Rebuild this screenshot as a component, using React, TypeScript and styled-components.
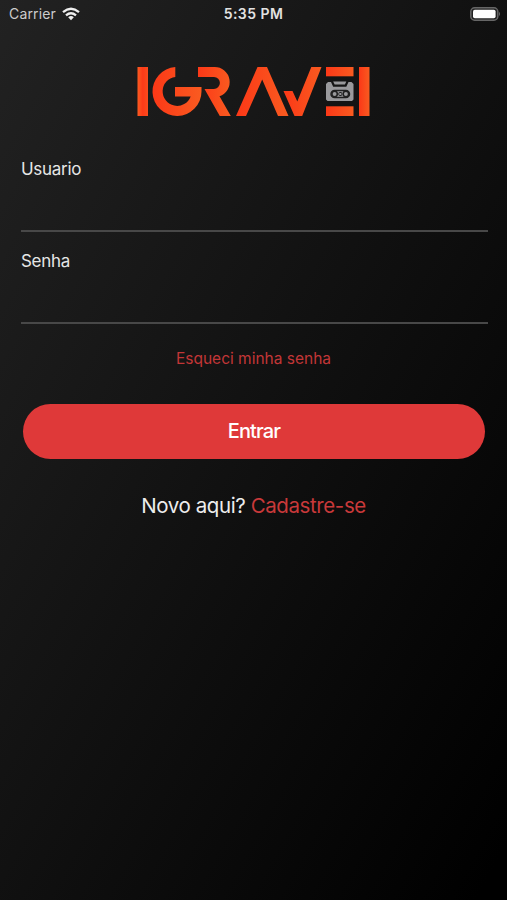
import React from "react";
import styled, { createGlobalStyle } from "styled-components";

const GlobalStyle = createGlobalStyle`
  * { box-sizing: border-box; }
  body {
    margin: 0;
    background: #000;
    font-family: Inter, "Liberation Sans", sans-serif;
  }
`;

const Screen = styled.main`
  display: flex;
  flex-direction: column;
  height: 900px;
  overflow: hidden;
  background: linear-gradient(119deg, #222 0%, #000 97%);
  color: #e6e6e6;
`;

const StatusBar = styled.header`
  display: grid;
  grid-template-columns: 1fr auto 1fr;
  align-items: center;
  height: 27px;
  padding: 0 6px 0 9px;
`;

const Carrier = styled.div`
  display: flex;
  align-items: center;
  gap: 6px;
  font-size: 14px;
  letter-spacing: 0.15px;
  color: #ccc;
`;

const Clock = styled.time`
  margin-right: 3px;
  font-size: 14px;
  font-weight: 600;
  letter-spacing: 0.45px;
  color: #e2e2e2;
`;

const Battery = styled.svg`
  justify-self: end;
`;

const Logo = styled.svg`
  display: block;
  flex: none;
  margin: 35px 0 0 134px;
`;

const Form = styled.form`
  display: flex;
  flex-direction: column;
  margin: 39px 19px 0 21px;
`;

const Field = styled.label`
  display: flex;
  flex-direction: column;
  height: 92px;
  font-size: 17px;
  line-height: 22px;
  letter-spacing: -0.3px;
`;

const Input = styled.input`
  height: 52px;
  padding: 0;
  border: 0;
  border-bottom: 2px solid #484848;
  outline: 0;
  background: transparent;
  color: inherit;
  font: inherit;
`;

const ForgotLink = styled.a`
  align-self: center;
  margin: 7px 2px 0 0;
  font-size: 15.5px;
  line-height: 20px;
  color: #c23637;
`;

const SubmitButton = styled.button`
  height: 55px;
  margin: 34.5px 3px 0 2px;
  padding: 0;
  border: 0;
  border-radius: 28px;
  background: #df3939;
  color: #fff;
  font: 500 20px Inter, sans-serif;
  letter-spacing: -0.85px;
`;

const SignUp = styled.p`
  margin: 33.5px 0 0;
  text-align: center;
  font-size: 20.5px;
  line-height: 28px;
  letter-spacing: -0.4px;
  color: #ededed;
`;

const SignUpLink = styled.a`
  letter-spacing: -0.4px;
  color: #c9393a;
`;

const WifiIcon = () => (
  <svg width="18" height="14" viewBox="0 0 18 14" fill="none" stroke="#eee" strokeWidth="2.3">
    <path d="M1 5.1Q9-1.7 17 5.1" />
    <path d="M4 8.3Q9 4.1 14 8.3" />
    <path d="M6.2 10.2Q9 7.9 11.8 10.2L9 13.3Z" fill="#eee" stroke="none" />
  </svg>
);

const BatteryIcon = () => (
  <Battery width="31" height="14" viewBox="0 0 31 14">
    <rect x="0.8" y="0.8" width="27" height="12.4" rx="3.8" fill="#222" stroke="#666" strokeWidth="1.5" />
    <rect x="3" y="2.7" width="22.6" height="8.6" rx="1.8" fill="#fff" />
    <path d="M29 4.8Q31 7 29 9.2Z" fill="#666" />
  </Battery>
);

const BrandLogo = () => (
  <Logo width="239" height="57" viewBox="134 62 239 57" role="img" aria-label="Igravei">
    <defs>
      <linearGradient id="flame">
        <stop offset="0" stopColor="#fc3817" />
        <stop offset="1" stopColor="#f95b20" />
      </linearGradient>
      <linearGradient id="ember">
        <stop offset="0" stopColor="#fc5a20" />
        <stop offset="0.5" stopColor="#fc3a18" />
        <stop offset="1" stopColor="#fb4b1c" />
      </linearGradient>
    </defs>
    <g fill="url(#flame)">
      <rect x="137.5" y="67" width="10.5" height="49" fill="url(#ember)" />
      <path d="M236 116L257.5 67H267L288.5 116H278L262.2 79.5L246 116Z" />
      <path d="M283.5 91H292.5L297.3 101.5L311.3 67H321.5L302.2 116H294.5Z" />
      <rect x="326" y="67" width="27.5" height="9.3" />
      <rect x="326" y="106.3" width="27.5" height="9.7" />
      <rect x="359" y="67" width="10.5" height="49" />
      <path d="M175.3 67V77A14.5 14.5 0 1 0 190.7 96.5H175V87H201.5V91.5A24.5 24.5 0 1 1 175.3 67Z" />
      <path d="M198 67H214.5A15 15 0 0 1 219.5 96.2L230.8 116H219.8L204.5 89H213.8A6 6 0 0 0 214 77H198Z" />
    </g>
    <path d="M326 84L328 82H331L333.2 86.8H346.3L348.5 82H351.5L353.5 84V99.5L352 101H327.5L326 99.5Z" fill="#99999c" />
    <path d="M333.2 81.5L334.6 84.6H344.9L346.3 81.5Z" fill="#99999c" />
    <g fill="#99999c" stroke="#202020" strokeWidth="1.5">
      <rect x="331" y="90.4" width="18.5" height="7.2" rx="3.6" />
      <circle cx="334.6" cy="94" r="2.7" />
      <circle cx="345.9" cy="94" r="2.7" />
      <rect x="338.8" y="92.5" width="3" height="3" rx="0.8" strokeWidth="1" />
    </g>
  </Logo>
);

export default function App() {
  return (
    <>
      <GlobalStyle />
      <Screen>
        <StatusBar>
          <Carrier>
            Carrier
            <WifiIcon />
          </Carrier>
          <Clock>5:35 PM</Clock>
          <BatteryIcon />
        </StatusBar>
        <BrandLogo />
        <Form onSubmit={(event) => event.preventDefault()}>
          <Field>
            Usuario
            <Input type="text" name="username" />
          </Field>
          <Field>
            Senha
            <Input type="password" name="password" />
          </Field>
          <ForgotLink>Esqueci minha senha</ForgotLink>
          <SubmitButton type="submit">Entrar</SubmitButton>
        </Form>
        <SignUp>
          Novo aqui? <SignUpLink>Cadastre-se</SignUpLink>
        </SignUp>
      </Screen>
    </>
  );
}
